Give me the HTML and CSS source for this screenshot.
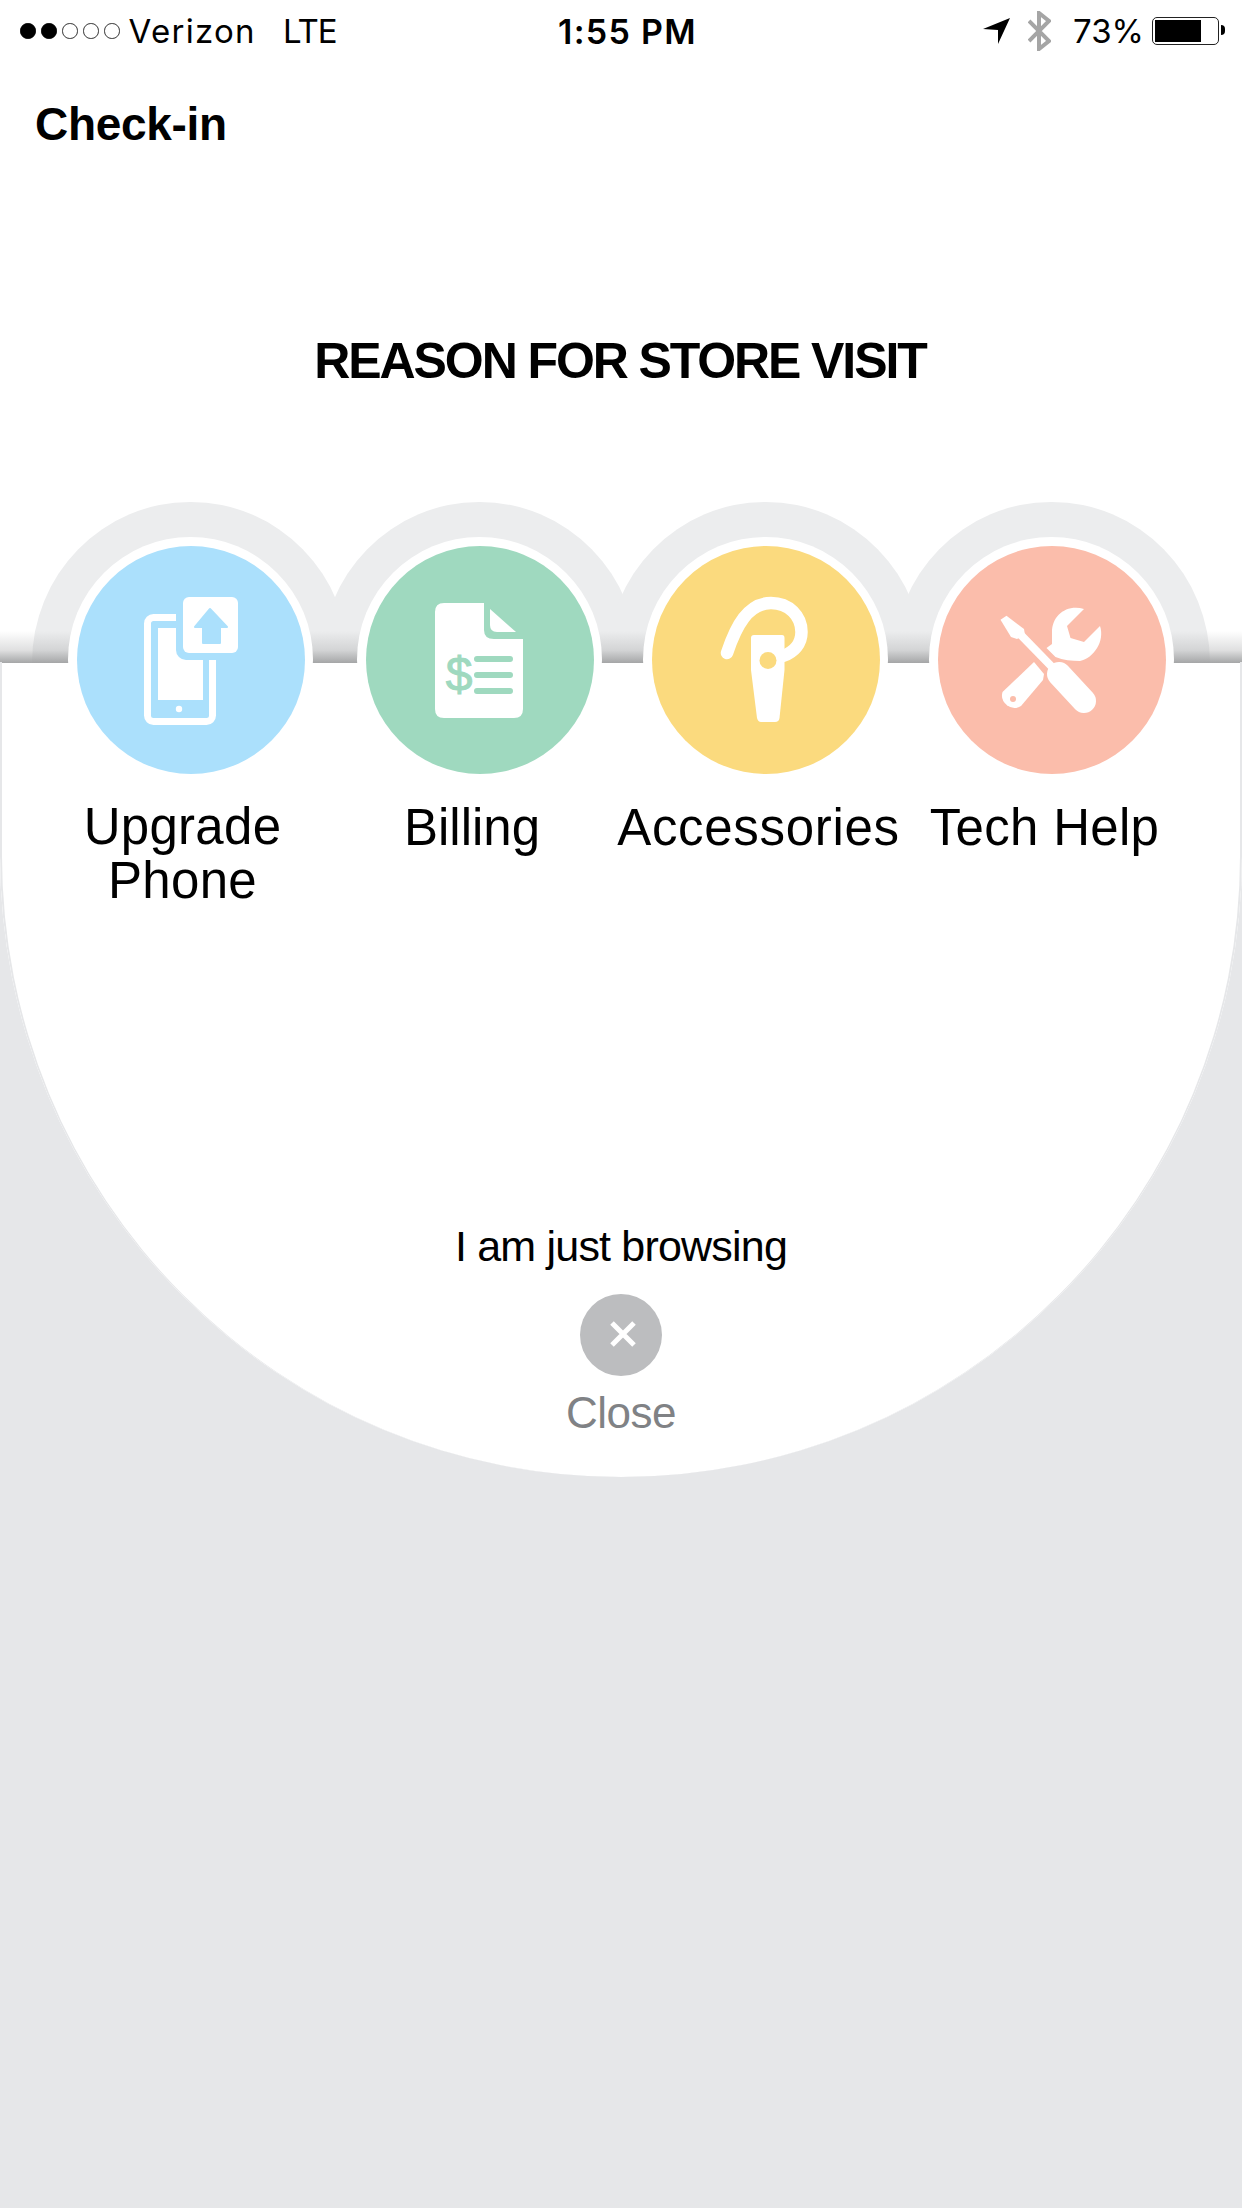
FILE: index.html
```html
<!DOCTYPE html>
<html lang="en">
<head>
  <meta charset="UTF-8" />
  <meta name="viewport" content="width=device-width, initial-scale=1.0"/>
  <title>Check-in</title>
  <link rel="stylesheet" href="styles.css">
</head>
<body>
  <div class="sheet">
    <div class="status-bar">
      <div class="status-left">
        <div class="signal">
          <span class="dot on"></span>
          <span class="dot on"></span>
          <span class="dot"></span>
          <span class="dot"></span>
          <span class="dot"></span>
        </div>
        <span class="carrier">Verizon</span>
        <span class="network">LTE</span>
      </div>
      <div class="time">1:55 PM</div>
      <div class="status-right">
        <svg class="location" viewBox="0 0 27 26"><polygon points="0,11 27,0 15,26 15,12" /></svg>
        <svg class="bluetooth" viewBox="0 0 23 40"><path d="M1 10 L21 30 L11 38 L11 2 L21 10 L1 30" /></svg>
        <span class="percent">73%</span>
        <div class="battery">
          <div class="battery-fill" style="width: 76%"></div>
        </div>
      </div>
    </div>

    <h1 class="title">Check-in</h1>
    <h2 class="heading">REASON FOR STORE VISIT</h2>

    <div class="options">
      <div class="band"></div>

      <div class="option">
        <div class="ring">
          <div class="circle blue">
            <!-- phone + upgrade badge -->
            <svg viewBox="0 0 228 228">
              <rect x="70.5" y="71.5" width="65" height="104" rx="6" fill="none" stroke="#fff" stroke-width="7" />
              <rect x="81" y="82" width="45" height="72" fill="#fff" />
              <circle cx="102" cy="163" r="3.2" fill="#fff" />
              <rect x="99" y="44" width="69" height="70" rx="10" fill="#abe0fc" />
              <rect x="106" y="51" width="55" height="56" rx="6" fill="#fff" />
              <path d="M133 63 L118 81 L126 81 L126 97 L143 97 L143 81 L150 81 Z" fill="#abe0fc" stroke="#abe0fc" stroke-width="2" stroke-linejoin="round" />
            </svg>
          </div>
        </div>
        <div class="label upgrade">Upgrade<br>Phone</div>
      </div>

      <div class="option">
        <div class="ring">
          <div class="circle green">
            <!-- bill -->
            <svg viewBox="0 0 228 228">
              <path d="M78 57 L118 57 L118 84 Q118 93 128 93 L157 93 L157 163 Q157 172 148 172 L78 172 Q69 172 69 163 L69 66 Q69 57 78 57 Z" fill="#fff" />
              <path d="M124 63 L150 86 L131 86 Q124 86 124 79 Z" fill="#fff" />
              <text class="bill-sign" x="93" y="145" text-anchor="middle">$</text>
              <path d="M111 113 H144 M111 129 H144 M111 145 H144" stroke="#9fd9bf" stroke-width="6" stroke-linecap="round" />
            </svg>
          </div>
        </div>
        <div class="label">Billing</div>
      </div>

      <div class="option">
        <div class="ring">
          <div class="circle yellow">
            <!-- headset -->
            <svg viewBox="0 0 228 228">
              <path d="M75 107 C84 80 96 57 119 57 C137 57 149.500 70 149.500 86 C149.500 98 142 106 131 110" fill="none" stroke="#fff" stroke-width="12.500" stroke-linecap="round" />
              <path d="M102 89 L130 89 Q132.500 89 132.500 92 L132.500 124 L127.500 172 Q127 176 123 176 L109 176 Q106 176 105 172 L99 124 L99 92 Q99 89 102 89 Z" fill="#fff" />
              <circle cx="116" cy="114.500" r="8.500" fill="#fbda7e" />
            </svg>
          </div>
        </div>
        <div class="label accessories">Accessories</div>
      </div>

      <div class="option">
        <div class="ring">
          <div class="circle salmon">
            <!-- wrench + screwdriver -->
            <svg viewBox="0 0 228 228">
              <path d="M96 116 L106 128 L105 134 L83 160 A12.500 12.500 0 0 1 64.500 146 Z" fill="#fff" />
              <circle cx="75" cy="153" r="3" fill="#fbbdab" />
              <path d="M146 63 C128 58 114 70 114 86 L114 98 L108.500 102 L117.500 111 C125 114 134 115 142 115 C156 112 167 95 162 80 L146 96 L132.500 92 L129 80 Z" fill="#fff" />
              <polygon points="62.500,73.700 68.500,69.700 86,83 87,89 79,93 73,91" fill="#fff" />
              <path d="M80 86 L116 123" stroke="#fff" stroke-width="8" />
              <path d="M121 128 L146 155" stroke="#fff" stroke-width="24" stroke-linecap="round" />
            </svg>
          </div>
        </div>
        <div class="label tech">Tech Help</div>
      </div>
    </div>

    <div class="browse">
      <div class="browse-text">I am just browsing</div>
      <div class="close-btn">
        <svg viewBox="0 0 26 26"><path d="M2 2 L24 24 M24 2 L2 24" /></svg>
      </div>
      <div class="close-text">Close</div>
    </div>
  </div>
</body>
</html>
```

FILE: styles.css
```css
body {
  margin: 0;
  height: 2208px;
  background: #e6e7e9;
  font-family: "Liberation Sans", Arial, sans-serif;
  color: #000;
  overflow: hidden;
}

.sheet {
  position: relative;
  height: 1477px;
  background: #fff;
  border-radius: 0 0 621px 621px;
  overflow: hidden;
}

/* thin line down the sides of the lower half */
.sheet::after {
  content: "";
  position: absolute;
  top: 662px;
  left: 0;
  right: 0;
  bottom: 0;
  border-left: 2px solid #e6e7e9;
  border-right: 2px solid #e6e7e9;
  border-radius: 0 0 621px 621px;
}

/* status bar */
.status-bar {
  display: grid;
  grid-template-columns: 1fr auto 1fr;
  align-items: center;
  height: 62px;
  padding: 0 17px 0 20px;
  font-family: Inter, sans-serif;
  font-size: 33px;
}

.status-left {
  display: flex;
  align-items: center;
}

.signal {
  display: flex;
  gap: 5.500px;
  margin-right: 9px;
}

.dot {
  width: 15.500px;
  height: 15.500px;
  box-sizing: border-box;
  border: 1px solid #333;
  border-radius: 50%;
}

.dot.on {
  background: #000;
  border-color: #000;
}

.carrier {
  letter-spacing: 1.300px;
}

.network {
  margin-left: 27px;
  letter-spacing: -1px;
}

.time {
  margin-left: 10px;
  font-size: 34px;
  font-weight: 600;
  letter-spacing: 1.300px;
}

.status-right {
  display: flex;
  align-items: center;
  justify-content: flex-end;
}

.location {
  width: 27px;
  height: 26px;
}

.bluetooth {
  width: 23px;
  height: 40px;
  margin-left: 18px;
  fill: none;
  stroke: #a5a5a5;
  stroke-width: 4;
}

.percent {
  margin-left: 22px;
}

.battery {
  position: relative;
  width: 67px;
  height: 28px;
  box-sizing: border-box;
  margin: 0 6px 0 8px;
  padding: 2px;
  border: 1.500px solid #222;
  border-radius: 5px;
}

.battery::after {
  content: "";
  position: absolute;
  top: 7px;
  right: -7px;
  width: 4px;
  height: 10px;
  background: #000;
  border-radius: 0 5px 5px 0;
}

.battery-fill {
  height: 100%;
  background: #000;
}

/* titles */
.title {
  margin: 35px 0 0 35px;
  font-size: 46px;
  line-height: 54px;
  letter-spacing: -0.300px;
}

.heading {
  margin: 180px 0 0;
  padding-right: 2px;
  font-size: 50px;
  line-height: 60px;
  letter-spacing: -2.100px;
  text-align: center;
}

/* option circles */
.options {
  position: relative;
  isolation: isolate;
  display: grid;
  grid-template-columns: 289px 286px 286px 245px;
  margin-top: 146px;
  padding-left: 68px;
}

.band {
  position: absolute;
  top: 94px;
  left: 0;
  right: 0;
  height: 32px;
  z-index: 1;
  background: linear-gradient(rgba(165, 166, 167, 0), rgba(165, 166, 167, 0.35) 60%, #a5a6a7);
}

.option {
  position: relative;
  display: flex;
  flex-direction: column;
  align-items: center;
  width: 245px;
}

/* grey arch behind the ring, stops where the band ends */
.option::before {
  content: "";
  position: absolute;
  top: -35px;
  left: -36px;
  width: 317px;
  height: 161px;
  background: #ecedee;
  border-radius: 158px 158px 0 0 / 161px 161px 0 0;
}

.ring {
  position: relative;
  z-index: 2;
  width: 245px;
  height: 245px;
  box-sizing: border-box;
  padding: 8.500px;
  background: #fff;
  border-radius: 50%;
}

.circle {
  width: 228px;
  height: 228px;
  border-radius: 50%;
}

.circle svg {
  display: block;
  width: 228px;
  height: 228px;
}

.blue { background: #abe0fc; }
.green { background: #9fd9bf; }
.yellow { background: #fbda7e; }
.salmon { background: #fbbdab; }

.bill-sign {
  font-size: 48px;
  fill: #9fd9bf;
  stroke: #9fd9bf;
  stroke-width: 1;
}

.label {
  position: relative;
  z-index: 2;
  margin: 19px 15px 0 0;
  font-size: 51px;
  line-height: 54px;
  text-align: center;
  white-space: nowrap;
}

.label.upgrade {
  margin: 18px 16px 0 0;
  letter-spacing: 0.300px;
}

.label.accessories {
  margin-right: 14px;
  letter-spacing: 0.700px;
}

.label.tech {
  margin-right: 14px;
  letter-spacing: 0.300px;
}

/* bottom of the sheet */
.browse {
  display: flex;
  flex-direction: column;
  align-items: center;
  margin-top: 313px;
}

.browse-text {
  font-size: 43px;
  line-height: 50px;
  letter-spacing: -0.800px;
}

.close-btn {
  display: flex;
  align-items: center;
  justify-content: center;
  width: 82px;
  height: 82px;
  margin-top: 23px;
  background: #bcbdbf;
  border-radius: 50%;
}

.close-btn svg {
  width: 26px;
  height: 26px;
  margin: 0 0 2px 3px;
  fill: none;
  stroke: #fff;
  stroke-width: 5;
}

.close-text {
  margin-top: 12px;
  font-size: 44px;
  line-height: 50px;
  letter-spacing: -0.500px;
  color: #808285;
}
```
